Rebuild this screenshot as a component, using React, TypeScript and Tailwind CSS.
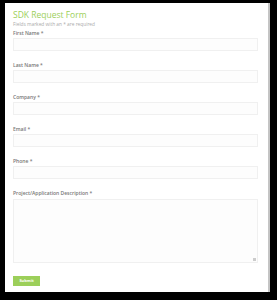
export default function App() {
  const fields = ["First Name *", "Last Name *", "Company *", "Email *", "Phone *"];
  return (
    <div className="w-[277px] h-[300px] bg-black pt-[3px] pl-[5px] font-['Open_Sans',sans-serif]">
      <div className="w-[265px] h-[289px] bg-white border-r-2 border-[#c4c4c4] pl-[8px] pr-[10px] flex flex-col">
        <h1 className="mt-[6px] text-[8.5px] leading-[12px] text-[#9ccf5a]">SDK Request Form</h1>
        <p className="text-[4.8px] leading-[6px] text-[#aaa]">Fields marked with an * are required</p>
        {fields.map((f) => (
          <div key={f} className="flex flex-col">
            <label className="mt-[3px] text-[5px] leading-[6px] font-semibold text-[#777]">{f}</label>
            <div className="mt-[2px] h-[13px] w-[245px] bg-[#fdfdfd] border border-[#f0f0f0] mb-[8px]" />
          </div>
        ))}
        <label className="mt-[3px] text-[5px] leading-[6px] font-semibold text-[#777]">Project/Application Description *</label>
        <div className="mt-[3px] h-[64px] w-[245px] bg-[#fdfdfd] border border-[#f0f0f0] relative">
          <span className="absolute right-[1px] bottom-[1px] w-[3px] h-[3px] bg-[#ccc]" />
        </div>
        <button className="mt-[13px] w-[27px] h-[10px] bg-[#9ccf5a] text-white text-[4px] font-bold">Submit</button>
      </div>
    </div>
  );
}
